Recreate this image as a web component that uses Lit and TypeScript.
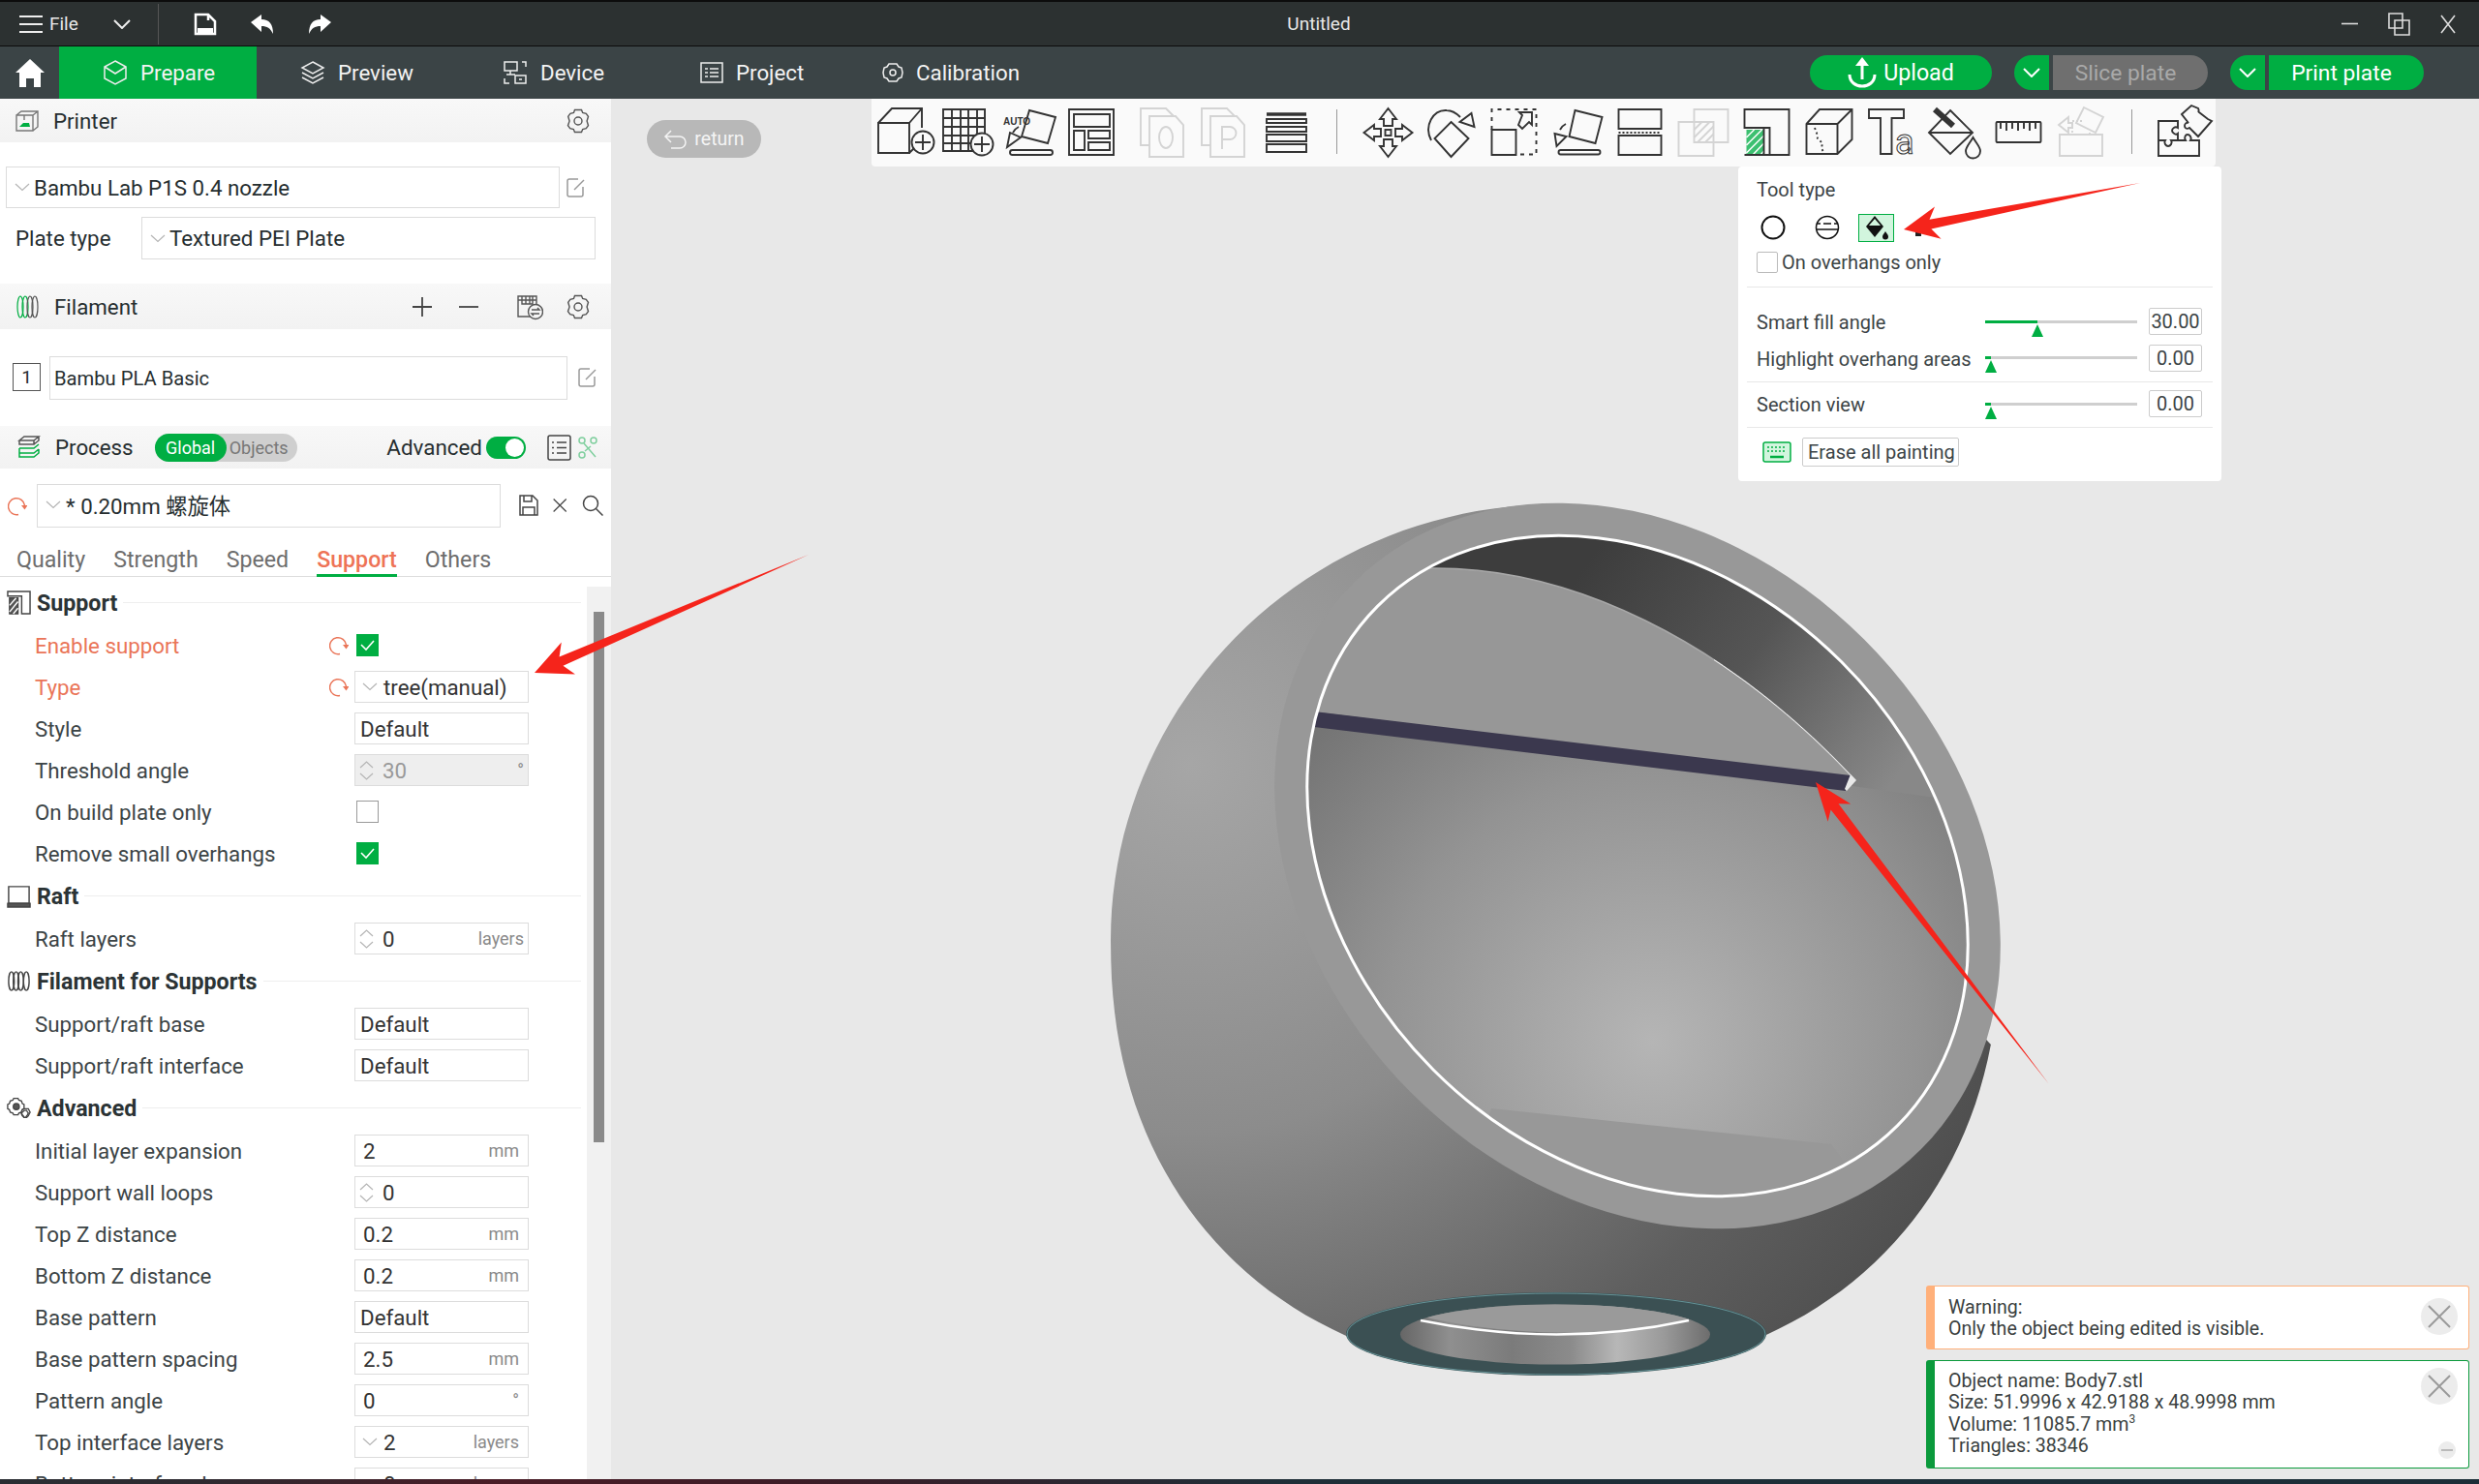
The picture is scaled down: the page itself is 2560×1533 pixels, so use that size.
import { LitElement, html, css, svg } from "lit";
import { customElement } from "lit/decorators.js";

const G = css`#00ae42`;

function bodyPath(): string {
  const cx = 1606, cy = 971, rx = 459, ry = 450;
  const seg: string[] = [];
  const steps = 180;
  for (let i = 0; i <= steps; i++) {
    const t = (i / steps) * Math.PI * 2;
    const c = Math.cos(t), s = Math.sin(t);
    // lower half (s > 0) is slightly squarer: the shape is cut flat by the hole
    const p = s > 0 ? 2.2 : 2;
    // the upper right part stays under the rim, which forms the outline there
    const k = c > 0 && s < 0.2 ? 0.95 : 1;
    const x = cx + k * rx * Math.sign(c) * Math.pow(Math.abs(c), 2 / p);
    const y = cy + k * ry * Math.sign(s) * Math.pow(Math.abs(s), 2 / p);
    seg.push(`${i === 0 ? "M" : "L"}${x.toFixed(1)},${y.toFixed(1)}`);
  }
  return seg.join("") + "Z";
}

function arrow(tx: number, ty: number, x: number, y: number, h: number, hw: number, nw: number): string {
  const L = Math.hypot(x - tx, y - ty);
  const u = [(x - tx) / L, (y - ty) / L];
  const v = [-u[1], u[0]];
  const pt = (back: number, side: number) =>
    `${(x - u[0] * back + v[0] * side).toFixed(1)},${(y - u[1] * back + v[1] * side).toFixed(1)}`;
  return `${tx},${ty} ${pt(h - 8, nw)} ${pt(h, hw)} ${x},${y} ${pt(h, -hw)} ${pt(h - 8, -nw)}`;
}

const spherePath = bodyPath();

const chev = html`<svg class="chev" viewBox="0 0 16 9"><path d="M1 1l7 6.5L15 1" /></svg>`;

const gear = html`<svg class="i24" viewBox="0 0 24 28"><path d="M8.5 2.5h7l1.2 3 3.6.8 2.2 3-1.4 4.7 1.4 4.7-2.2 3-3.6.8-1.2 3h-7l-1.2-3-3.6-.8-2.2-3L3.1 14 1.700 9.300l2.2-3 3.600-.8z" /><circle cx="12" cy="14" r="4" /></svg>`;

const editIc = html`<svg class="i20" viewBox="0 0 20 20"><path d="M17 9v8a2 2 0 0 1-2 2H3a2 2 0 0 1-2-2V3a2 2 0 0 1 2-2h9" /><path d="M8 12l10-10" /></svg>`;

const resetIc = html`<svg class="i20 orange" viewBox="0 0 20 20"><path d="M11 18.500A8.500 8.500 0 1 1 17.500 9" /><path class="fo" d="M14 9h6.500l-3 4.500z" /></svg>`;

type Row = { l: string; k: string; v?: string; u?: string; on?: boolean; mod?: boolean; dis?: boolean };

const secs: { h: string; ic: any; rows: Row[] }[] = [
  {
    h: "Support",
    ic: html`<svg class="sec-ic" viewBox="0 0 26 26"><path d="M1 1h24v24h-9V6H1z" /><path class="f" d="M3 8h9v17H3z" /><path class="wl" d="M3 16l7-8M3 23l9-11M7 25l5-6" /></svg>`,
    rows: [
      { l: "Enable support", k: "check", on: true, mod: true },
      { l: "Type", k: "combo", v: "tree(manual)", mod: true },
      { l: "Style", k: "text", v: "Default" },
      { l: "Threshold angle", k: "spin", v: "30", u: "°", dis: true },
      { l: "On build plate only", k: "check" },
      { l: "Remove small overhangs", k: "check", on: true },
    ],
  },
  {
    h: "Raft",
    ic: html`<svg class="sec-ic" viewBox="0 0 26 26"><path d="M2 3h22v18H2z" /><path class="f" d="M1 21h24v4H1z" /></svg>`,
    rows: [{ l: "Raft layers", k: "spin", v: "0", u: "layers" }],
  },
  {
    h: "Filament for Supports",
    ic: html`<svg class="sec-ic" viewBox="0 0 26 26"><ellipse cx="5" cy="13" rx="3" ry="10" /><ellipse cx="10" cy="13" rx="3" ry="10" /><ellipse cx="15" cy="13" rx="3" ry="10" /><ellipse cx="21" cy="13" rx="3" ry="10" /></svg>`,
    rows: [
      { l: "Support/raft base", k: "text", v: "Default" },
      { l: "Support/raft interface", k: "text", v: "Default" },
    ],
  },
  {
    h: "Advanced",
    ic: html`<svg class="sec-ic" viewBox="0 0 28 28"><path d="M8 3h5l1 2 3 1 1 3 2 1v5l-2 1-1 3-3 1-1 2H8l-1-2-3-1-1-3-2-1v-5l2-1 1-3 3-1z" /><circle class="f" cx="11" cy="12.500" r="3.500" /><path fill="#fff" d="M20 15h5l1 2 1 2-1 2-1 2-2 2h-3l-2-2-1-2v-3l1-2z" /><path d="M20 17h3l1 2 1 1-1 2-1 1-1 2h-2l-1-2-1-1-1-2 1-1z" /></svg>`,
    rows: [
      { l: "Initial layer expansion", k: "num", v: "2", u: "mm" },
      { l: "Support wall loops", k: "spin", v: "0" },
      { l: "Top Z distance", k: "num", v: "0.2", u: "mm" },
      { l: "Bottom Z distance", k: "num", v: "0.2", u: "mm" },
      { l: "Base pattern", k: "text", v: "Default" },
      { l: "Base pattern spacing", k: "num", v: "2.5", u: "mm" },
      { l: "Pattern angle", k: "num", v: "0", u: "°" },
      { l: "Top interface layers", k: "combo", v: "2", u: "layers" },
      { l: "Bottom interface layers", k: "combo", v: "0", u: "layers" },
    ],
  },
];

const tb1 = [
  svg`<path d="M4 25L18 10h31v20M4 25h32v31H4zM36 25l13-15M36 56l8-8" /><circle class="w" cx="50" cy="45" r="11.500" /><path d="M50 37v16M42 45h16" />`,
  svg`<path d="M7 11h43v43H7zM7 20h43M7 29h43M7 38h43M7 46h43M16 11v43M25 11v43M33 11v43M42 11v43" /><circle class="w" cx="47" cy="47" r="11.500" /><path d="M47 39v16M39 47h16" />`,
  svg`<path class="w" d="M32 12l27 7-8 27-27-7z" /><text class="auto" x="5" y="27">AUTO</text><path d="M15 35q2-4 6-6" /><path class="w" d="M9 50l3-15 11 5z" /><rect x="12" y="53" width="44" height="5" rx="2.500" />`,
  svg`<path d="M9 11h46v47H9zM14 16h37v13H14zM14 33h11v20H14zM29 33h22v8H29zM29 45h22v8H29z" />`,
];
const tb1g = [
  svg`<g class="gr"><path d="M10 10h26l8 8v30H10z" /><path class="w" d="M19 18h27l8 9v33H19z" /><ellipse cx="36" cy="40" rx="7" ry="11" /></g>`,
  svg`<g class="gr"><path d="M9 10h26l8 8v30H9z" /><path class="w" d="M18 18h27l8 9v33H18z" /><path d="M30 52V29h8a6 6 0 0 1 0 13h-8" /></g>`,
  svg`<path d="M12 16h41" class="thick" /><path d="M12 21h41v4H12zM12 29h41v5H12zM12 37h41v7H12zM12 47h41v8H12z" />`,
];
const tb2 = [
  svg`<path d="M32.500 10l8.500 11h-4v7h-9v-7h-4zM32.500 60L41 49h-4v-7h-9v7h-4zM7.500 35L18 27v4h7v8h-7v4zM57.500 35L47 27v4h-7v8h7v4z" /><rect x="29.500" y="32" width="6" height="6" />`,
  svg`<path d="M12 43C4 28 14 11 28 12c6 0 10 3 14 7" /><path d="M53.500 15l3 14-15-5z" /><path d="M32.500 24l18 17-18 19-17-19z" />`,
  svg`<path class="dash" d="M9.500 32V11h46v46.500H36" /><path d="M9.500 32h25v26h-25z" /><path d="M37 27l4 4 7-7 3 3V14H38l3 3z" />`,
  svg`<path d="M30.500 12l28 7-7 27-27-7z" /><path d="M15 32q2-4 6-6" /><path d="M9.500 36l12 3-10 10z" /><rect x="13.500" y="53" width="43" height="4.500" rx="2.200" />`,
  svg`<path d="M10.500 11h44v20h-44zM10.500 38h44v20h-44z" /><path class="dots" d="M10.500 35h44" />`,
  svg`<g class="gr"><path d="M23.500 11h35v34h-35zM7.500 24h36v35h-36z" /><path d="M23.500 32l8-8M23.500 40l16-16M27 45l16.500-16.500M35 45l8.500-8.500" /></g>`,
  svg`<path d="M10.500 11h46v47h-20V30h-26z" /><path fill="#3cc070" stroke="none" d="M12.500 32h18v26h-18z" /><path class="wl" d="M12.500 40l8-8M12.500 48l16-16M12.500 56l18-18M19 58l11.500-12M27 58l3.500-4" /><path d="M30.500 30v28h6M10.500 58h20" />`,
  svg`<path d="M9.500 26L23 11h33.500v31L41.500 57h-32zM9.500 26h32v31M41.500 26L56.500 11" /><path class="dots2" d="M18 30l2 5 1 6 5 5-1 5 3 6" />`,
  svg`<path d="M9 11h36v9H32.500v37H21V20H9z" /><text class="ta" x="36" y="57">a</text>`,
  svg`<path d="M28 12l23 23-23 22L6 35zM6 35h45" /><path class="thick2" d="M12 11l19 17" /><path class="w" d="M51.500 40c4 7 7.500 10 7.500 14a7.500 7.500 0 0 1-15 0c0-4 3.500-7 7.500-14z" />`,
  svg`<rect x="10.500" y="24" width="46" height="21" rx="1" /><path d="M15 24v7M21 24v9M27 24v7M33 24v9M39 24v7M45 24v9M51 24v7" />`,
  svg`<g class="gr"><path d="M11 37h44v22H11z" /><path d="M36 9l20 10-8 16-20-10z" /><path class="dots" d="M24 35V23h10M42 37v-4" /><path d="M10 27l10-8v6h4v5h-4v5z" /></g>`,
];
const puzzle = svg`<path d="M7 23h20v7c-3-2-6 1-6 3s4 5 6 3v7h-7c2 3-1 6-3 6s-5-3-3-6H7zM27 43h8c-2-3 0-6 2-6s5 3 3 6h9v16H7V43M7 43v16" /><path d="M36 14l10-9 7 3c2 4-1 2 1 4l9 7 4 2-14 16-9-9c-3 2-5 0-5-2s2-4 4-3z" transform="translate(-5 2)" />`;

@customElement("app-root")
export class AppRoot extends LitElement {
  static styles = css`
    :host { display: block; position: relative; width: 2560px; height: 1533px; overflow: hidden; font-family: Roboto, "Noto Sans CJK SC", sans-serif; color: #262e30; background: #e8e8e8; }
    .page { display: flex; flex-direction: column; height: 100%; }
    svg { display: block; flex: none; fill: none; }
    .titlebar { height: 48px; box-sizing: border-box; border-top: 2px solid #0c0c0c; border-bottom: 1px solid #0c0c0c; background: #2c3131; display: flex; align-items: center; color: #e8e8e8; font-size: 19px; flex: none; }
    .t-left { flex: 0 0 1322px; display: flex; align-items: center; padding-left: 20px; box-sizing: border-box; }
    .burger { width: 24px; height: 20px; stroke: #eee; stroke-width: 2; }
    .file { margin-left: 7px; width: 36px; }
    .t-chev { width: 18px; height: 10px; margin-left: 30px; stroke: #eee; stroke-width: 2; }
    .t-sep { width: 1px; height: 42px; background: #555; margin: 0 36px 0 28px; }
    .t-ic { width: 24px; height: 24px; margin-right: 35px; }
    .t-save { stroke: #fff; stroke-width: 2.500; }
    .title { width: 80px; text-align: center; }
    .win { margin-left: auto; display: flex; align-items: center; gap: 31px; padding-right: 24px; stroke: #ddd; stroke-width: 1.600; }
    .nav { height: 54px; flex: none; background: #3b4446; display: flex; align-items: stretch; color: #f3f3f3; font-size: 22.300px; }
    .home { width: 61px; display: flex; align-items: center; justify-content: center; }
    .tab { display: flex; align-items: center; gap: 13px; stroke: #eee; }
    .tab svg { width: 26px; height: 26px; stroke-width: 1.500; }
    .prep { background: ${G}; width: 204px; box-sizing: border-box; padding-left: 45px; }
    .prev { margin-left: 45px; width: 209px; }
    .dev { width: 203px; gap: 13px; }
    .proj { width: 187px; gap: 12px; }
    .calib { gap: 11px; }
    .nav-r { margin-left: auto; display: flex; align-items: center; padding-right: 57px; }
    .btn { height: 36px; background: ${G}; display: flex; align-items: center; justify-content: center; color: #fff; font-size: 22.800px; }
    .up { width: 188px; border-radius: 18px; gap: 7px; stroke: #fff; font-size: 23.200px; }
    .bl { width: 36px; border-radius: 18px 0 0 18px; margin-left: 23px; stroke: #fff; stroke-width: 2; }
    .bl svg { width: 18px; height: 10px; }
    .br { width: 160px; border-radius: 0 18px 18px 0; margin-left: 4px; box-sizing: border-box; padding-right: 10px; }
    .br.off { background: #6f6f6f; color: #a9a9a9; }
    .main { flex: 1; display: flex; min-height: 0; }
    .panel { width: 631px; background: #fff; display: flex; flex-direction: column; flex: none; stroke: #555; }
    .ph { background: linear-gradient(#f8f8f8, #f2f2f2); display: flex; align-items: center; font-size: 22.300px; flex: none; }
    .ph1 { height: 45px; padding-left: 16px; }
    .ph2 { height: 47px; padding-left: 17px; }
    .ph3 { height: 44px; padding-left: 18px; }
    .ph-t { margin-left: 15px; }
    .ph svg.g { stroke: #777; }
    .end { margin-left: auto; margin-right: 22px; }
    .i24 { width: 24px; height: 28px; stroke-width: 1.400; stroke: #555; }
    .i20 { width: 20px; height: 20px; stroke: #999; stroke-width: 1.500; }
    .orange { stroke: #ea7558; }
    .fo { fill: #ea7558; stroke: none; }
    .combo { border: 1px solid #dcdcdc; box-sizing: border-box; display: flex; align-items: center; font-size: 22.300px; background: #fff; }
    .chev { width: 16px; height: 9px; stroke: #b5b5b5; stroke-width: 1.200; }
    .pbody { height: 146px; flex: none; box-sizing: border-box; padding-top: 25px; }
    .prow { display: flex; align-items: center; padding-left: 6px; }
    .c1 { width: 572px; height: 43px; padding-left: 8px; gap: 4px; }
    .ed1 { margin-left: 7px; }
    .prow2 { display: flex; align-items: center; padding-left: 16px; margin-top: 9px; }
    .pl { width: 130px; font-size: 22.300px; }
    .c2 { width: 469px; height: 44px; padding-left: 8px; gap: 4px; }
    .filic { margin-left: 0; width: 24px; height: 26px; stroke: ${G}; stroke-width: 1.200; }
    .pm { stroke: #444; stroke-width: 1.800; width: 20px; height: 20px; }
    .mr { margin-left: auto; margin-right: 22px; display: flex; align-items: center; gap: 28px; }
    .ams { width: 28px; height: 28px; stroke: #555; stroke-width: 1.400; margin-left: 11px; margin-right: -4px; }
    .fbody { height: 100px; flex: none; box-sizing: border-box; padding: 28px 0 0 13px; display: flex; align-items: flex-start; align-self: stretch; }
    .num { width: 29px; height: 29px; margin-top: 7px; border: 1px solid #555; box-sizing: border-box; display: flex; align-items: center; justify-content: center; font-size: 19px; }
    .c3 { width: 535px; height: 45px; margin-left: 9px; padding-left: 4px; font-size: 20.200px; }
    .ed3 { margin: 12px 0 0 11px; }
    .pil { margin-left: 22px; width: 147px; height: 29px; border-radius: 15px; background: #cfcfcf; display: flex; font-size: 18px; color: #777; align-items: center; }
    .gl { width: 74px; height: 29px; border-radius: 15px; background: ${G}; color: #fff; display: flex; align-items: center; justify-content: center; margin-right: 3px; }
    .adv { margin-left: auto; font-size: 22.400px; }
    .tog { width: 41px; height: 23px; border-radius: 12px; background: ${G}; margin-left: 4px; display: flex; justify-content: flex-end; align-items: center; padding-right: 2px; box-sizing: border-box; }
    .knob { width: 19px; height: 19px; border-radius: 50%; background: #fff; }
    .lst { width: 25px; height: 27px; margin-left: 22px; stroke: #444; stroke-width: 1.500; }
    .sci { width: 22px; height: 24px; margin: 0 13px 0 6px; stroke: #7fcf9e; stroke-width: 1.500; }
    .preset { height: 61px; flex: none; display: flex; align-items: flex-start; padding: 16px 0 0 8px; box-sizing: border-box; }
    .rs { margin-top: 13px; }
    .c4 { width: 479px; height: 45px; margin-left: 10px; padding-left: 8px; gap: 5px; padding-bottom: 3px; }
    .ps { display: flex; align-items: center; margin: 11px 0 0 18px; gap: 13px; stroke: #444; stroke-width: 1.500; }
    .ps svg { width: 22px; height: 22px; }
    .ps .xs { width: 18px; }
    .tabs { height: 51px; flex: none; box-sizing: border-box; border-bottom: 1px solid #ddd; display: flex; gap: 29px; padding-left: 17px; font-size: 23.200px; color: #6e6e6e; }
    .t { height: 51px; box-sizing: border-box; padding-top: 19px; }
    .t.on { color: #ee7356; font-weight: 500; border-bottom: 3px solid ${G}; }
    .scroll { flex: 1; min-height: 0; display: flex; }
    .content { width: 606px; flex: none; overflow: hidden; padding-top: 4px; box-sizing: border-box; }
    .track { width: 25px; margin-top: 10px; background: #f1f1f1; display: flex; justify-content: center; padding-top: 26px; box-sizing: border-box; }
    .thumb { width: 11px; height: 548px; background: #8a8a8a; }
    .sec { height: 45px; display: flex; align-items: center; padding-left: 7px; font-size: 23.200px; font-weight: 700; color: #2b3335; }
    .sec-ic { width: 25px; height: 25px; stroke: #444; stroke-width: 1.500; margin-right: 6px; }
    .f { fill: #555; }
    .wl { stroke: #fff; stroke-width: 1.500; }
    .line { flex: 1; height: 1px; background: #eeeeee; margin: 0 6px 0 6px; }
    .row { height: 43px; display: flex; align-items: center; padding-left: 36px; font-size: 22.300px; color: #3c4446; flex: none; }
    .lab { width: 304px; flex: none; }
    .lab.mod { color: #ea7558; }
    .rst { width: 26px; flex: none; }
    .ctl { width: 180px; height: 33px; box-sizing: border-box; border: 1px solid #dcdcdc; display: flex; align-items: center; font-size: 22.300px; color: #333; position: relative; }
    .ctl.txt { padding-left: 5px; }
    .ctl.numc { padding-left: 8px; }
    .ctl.spn { padding-left: 28px; }
    .ctl.cmb { padding-left: 7px; gap: 6px; }
    .ctl.dis { background: #eeeeee; color: #999; }
    .unit { margin-left: auto; font-size: 18px; color: #8a8a8a; padding-right: 9px; }
    .spin .unit { padding-right: 4px; }
    .arrs { position: absolute; left: 4px; top: 5px; width: 15px; height: 22px; stroke: #b5b5b5; stroke-width: 1.200; }
    .cb { width: 23px; height: 23px; margin-left: 2px; box-sizing: border-box; border: 1px solid #9a9a9a; background: #fff; display: flex; align-items: center; justify-content: center; }
    .cb.on { background: ${G}; border-color: ${G}; }
    .cb svg { width: 15px; height: 12px; stroke: #fff; stroke-width: 1.600; }
    .vp { flex: 1; position: relative; min-width: 0; background: #e8e8e8; }
    .scene { position: absolute; inset: 0; width: 100%; height: 100%; }
    .ret { position: absolute; left: 37px; top: 22px; width: 118px; height: 39px; border-radius: 20px; background: #b8b8b8; color: #f4f4f4; font-size: 19.500px; display: flex; align-items: center; justify-content: center; gap: 6px; stroke: #f4f4f4; stroke-width: 1.500; }
    .ret svg { width: 26px; height: 22px; }
    .tb { position: absolute; left: 269px; top: 0; width: 1388px; height: 70px; background: #fafafa; display: flex; padding-left: 3px; box-sizing: border-box; align-items: flex-start; border-radius: 0 0 4px 4px; }
    .tb svg { stroke: #333; stroke-width: 1.900; height: 70px; }
    .tb .c64 { width: 64px; }
    .tb .c65 { width: 65px; }
    .tb .gap9 { margin-left: 9px; }
    .vs { width: 1px; height: 46px; background: #999; flex: none; margin: 11px 20px 0; }
    .w { fill: #fafafa; }
    .auto { font: 700 10px "Liberation Sans", Roboto, sans-serif; fill: #333; stroke: none; }
    .ta { font: 36px Roboto, sans-serif; fill: #fafafa; stroke: #333; stroke-width: 1; }
    .gr { stroke: #d4d4d4; }
    .thick { stroke-width: 3.500; }
    .thick2 { stroke-width: 6; }
    .dash { stroke-dasharray: 4 5; }
    .dots { stroke-dasharray: 2 2; }
    .dots2 { stroke-dasharray: 2 3; }
    .pop { position: absolute; left: 1164px; top: 70px; width: 499px; height: 325px; background: #fff; border-radius: 4px; box-sizing: border-box; padding: 0 19px; font-size: 20px; color: #3c4446; display: flex; flex-direction: column; }
    .pop-t { height: 48px; padding-top: 12px; box-sizing: border-box; }
    .tools { display: flex; align-items: center; height: 30px; stroke: #111; stroke-width: 2; flex: none; padding-left: 3px; }
    .tools svg { width: 28px; height: 28px; }
    .tools .s2 { margin-left: 28px; stroke-width: 1.500; }
    .tools .s3 { width: 12px; height: 18px; margin-left: 21px; stroke: none; }
    .bk { width: 37px; height: 29px; margin-left: 18px; background: #d2f5de; border: 1.500px solid ${G}; box-sizing: border-box; display: flex; align-items: center; justify-content: center; }
    .bk svg { width: 26px; height: 26px; }
    .ov { display: flex; align-items: center; gap: 4px; margin-top: 9px; height: 24px; flex: none; }
    .ov i { display: block; width: 22px; height: 22px; box-sizing: border-box; border: 1px solid #bbb; border-radius: 2px; }
    .hr { height: 1px; background: #e8e8e8; margin: 0 -10px; flex: none; }
    .hr1 { margin-top: 13px; }
    .sl { display: flex; align-items: center; height: 38px; flex: none; position: relative; }
    .sl1 { margin-top: 17px; }
    .sl-l { width: 236px; flex: none; white-space: nowrap; }
    .sl-t { width: 157px; height: 3px; background: #cfcfcf; position: relative; flex: none; margin-top: -2px; }
    .sl-f { height: 3px; background: ${G}; }
    .sl-k { position: absolute; top: 4px; width: 0; height: 0; border-left: 6px solid transparent; border-right: 6px solid transparent; border-bottom: 13px solid ${G}; }
    .sl-v { width: 55px; height: 28px; margin-left: 12px; box-sizing: border-box; border: 1px solid #ccc; border-radius: 2px; display: flex; align-items: center; justify-content: center; font-size: 20px; margin-top: -2px; }
    .sl2 { height: 37px; margin-bottom: 5px; }
    .sl3 { height: 46px; }
    .er { display: flex; align-items: center; margin-top: 10px; padding-left: 6px; flex: none; }
    .er svg { width: 30px; height: 24px; stroke: ${G}; stroke-width: 1.500; }
    .er-b { margin-left: 11px; width: 162px; height: 30px; border: 1px solid #ccc; border-radius: 2px; box-sizing: border-box; display: flex; align-items: center; padding-left: 5px; white-space: nowrap; }
    .nots { position: absolute; right: 10px; bottom: 11px; width: 561px; display: flex; flex-direction: column; gap: 11px; font-size: 19.600px; line-height: 22.300px; color: #3a3f40; }
    .no { background: #fff; box-sizing: border-box; border: 1px solid; border-left-width: 9px; border-radius: 3px; padding-left: 14px; position: relative; }
    .wn { height: 66px; border-color: #ffb07a; padding-top: 11px; }
    .inf { height: 112px; border-color: #0b9a3c; padding-top: 10px; }
    .x { position: absolute; right: 11px; top: 12px; width: 38px; height: 38px; border-radius: 50%; background: #ececec; stroke: #9a9a9a; stroke-width: 2; }
    .x.x2 { top: 7px; }
    .mn { position: absolute; right: 13px; bottom: 9px; width: 18px; height: 18px; border-radius: 50%; background: #ececec; stroke: #aaa; stroke-width: 1.500; }
    sup { font-size: 12px; line-height: 0; }
    .strip { height: 5px; flex: none; background: linear-gradient(90deg, #2a2e33, #2e2a30 8%, #4a1c26 20%, #3d1c26 32%, #1f2f38 52%, #1c2e38); }
    .over { position: absolute; inset: 0; width: 100%; height: 100%; pointer-events: none; }
  `;

  private control(r: Row) {
    if (r.k === "check")
      return html`<div class="cb ${r.on ? "on" : ""}">${r.on ? html`<svg viewBox="0 0 15 12"><path d="M1 5l5 5 8-9" /></svg>` : ""}</div>`;
    if (r.k === "text") return html`<div class="ctl txt">${r.v}</div>`;
    if (r.k === "num") return html`<div class="ctl numc">${r.v}<span class="unit">${r.u}</span></div>`;
    if (r.k === "combo") return html`<div class="ctl cmb">${chev}${r.v}${r.u ? html`<span class="unit">${r.u}</span>` : ""}</div>`;
    return html`<div class="ctl spn spin ${r.dis ? "dis" : ""}"><svg class="arrs" viewBox="0 0 15 22"><path d="M1 8l6.500-6L14 8M1 14l6.500 6 6.500-6" /></svg>${r.v}${r.u ? html`<span class="unit">${r.u}</span>` : ""}</div>`;
  }

  private slider(label: string, pct: number, v: string, cls: string) {
    return html`<div class="sl ${cls}"><span class="sl-l">${label}</span><div class="sl-t"><div class="sl-f" style="width:${pct}px"></div><div class="sl-k" style="left:${pct - 6}px"></div></div><div class="sl-v">${v}</div></div>`;
  }

  render() {
    return html`<div class="page">
      <div class="titlebar">
        <div class="t-left">
          <svg class="burger" viewBox="0 0 24 20"><path d="M0 2h24M0 10h24M0 18h24" /></svg>
          <span class="file">File</span>
          <svg class="t-chev" viewBox="0 0 18 10"><path d="M1 1l8 8 8-8" /></svg>
          <div class="t-sep"></div>
          <svg class="t-ic t-save" viewBox="0 0 24 24"><path d="M2 2h13l7 7v13H2zM15 2v6" /><path fill="#fff" stroke="none" d="M4 16h16v6H4z" /></svg>
          <svg class="t-ic" viewBox="0 0 24 24"><path fill="#fff" d="M11 2v5c8 0 12 5 12 15-3-6-6-8-12-8v6L0 10z" /></svg>
          <svg class="t-ic" viewBox="0 0 24 24"><path fill="#fff" d="M13 2v5C5 7 1 12 1 22c3-6 6-8 12-8v6l11-10z" /></svg>
        </div>
        <div class="title">Untitled</div>
        <div class="win">
          <svg width="17" height="3" viewBox="0 0 17 3"><path d="M0 1.500h17" /></svg>
          <svg width="23" height="24" viewBox="0 0 23 24"><path d="M1 1h14v15H1zM7 8h15v15H7z" /></svg>
          <svg width="16" height="20" viewBox="0 0 16 20"><path d="M1 1l14 18M15 1L1 19" /></svg>
        </div>
      </div>

      <div class="nav">
        <div class="home"><svg width="30" height="29" viewBox="0 0 30 29"><path fill="#fff" d="M15 0l15 14h-4v15h-7v-9h-8v9H4V14H0z" /></svg></div>
        <div class="tab prep"><svg viewBox="0 0 26 26"><path d="M13 1l11 6v12l-11 6-11-6V7zM2 7l11 7 11-7M13 14v0" /></svg>Prepare</div>
        <div class="tab prev"><svg viewBox="0 0 26 26"><path d="M13 2l11 6-11 6-11-6zM2 13l11 6 11-6M2 18l11 6 11-6" /></svg>Preview</div>
        <div class="tab dev"><svg viewBox="0 0 26 26"><path d="M2 2h13v9H2zM8 11v4M4 15h9M20 2h4v5M2 19v5h5M13 24v-8h11v8zM17 20h3" /></svg>Device</div>
        <div class="tab proj"><svg viewBox="0 0 26 26"><path d="M2 3h22v20H2zM6 9h3M11 9h9M6 13h3M11 13h9M6 17h3M11 17h9" /></svg>Project</div>
        <div class="tab calib"><svg viewBox="0 0 26 26"><path d="M9 4h8l2 3 3 1 1 5-1 5-3 1-2 3H9l-2-3-3-1-1-5 1-5 3-1z" /><circle cx="13" cy="13" r="3" /></svg>Calibration</div>
        <div class="nav-r">
          <div class="btn up"><svg width="30" height="32" viewBox="0 0 30 32" fill="none"><path stroke-width="3" d="M15 4v19M2 18c0 16 26 16 26 0" /><path fill="#fff" stroke="none" d="M15 0l7 9H8z" /></svg>Upload</div>
          <div class="btn bl"><svg viewBox="0 0 18 10"><path d="M1 1l8 8 8-8" /></svg></div>
          <div class="btn br off">Slice plate</div>
          <div class="btn bl"><svg viewBox="0 0 18 10"><path d="M1 1l8 8 8-8" /></svg></div>
          <div class="btn br">Print plate</div>
        </div>
      </div>

      <div class="main">
        <div class="panel">
          <div class="ph ph1">
            <svg class="g" width="24" height="22" viewBox="0 0 24 22" stroke-width="1.400"><path d="M1 5h17v16H1zM1 5l5-4h17v16l-5 4M18 5l5-4" /><path fill="#00ae42" stroke="none" d="M4 17l4-4h6l1 4z" /><path d="M9 5v5" /></svg>
            <span class="ph-t">Printer</span>
            <span class="end">${gear}</span>
          </div>
          <div class="pbody">
            <div class="prow"><div class="combo c1">${chev}Bambu Lab P1S 0.4 nozzle</div><span class="ed1">${editIc}</span></div>
            <div class="prow2"><span class="pl">Plate type</span><div class="combo c2">${chev}Textured PEI Plate</div></div>
          </div>
          <div class="ph ph2">
            <svg class="filic" viewBox="0 0 24 26"><ellipse cx="4" cy="13" rx="3" ry="11" /><ellipse cx="9" cy="13" rx="3" ry="11" /><ellipse cx="14" cy="13" rx="3" ry="11" stroke="#555" /><ellipse cx="19" cy="13" rx="3" ry="11" stroke="#555" /></svg>
            <span class="ph-t">Filament</span>
            <div class="mr">
              <svg class="pm" viewBox="0 0 20 20"><path d="M10 0v20M0 10h20" /></svg>
              <svg class="pm" viewBox="0 0 20 20"><path d="M0 10h20" /></svg>
              <svg class="ams" viewBox="0 0 28 28"><path d="M2 3h19v21H2zM2 7h19M6 3v8h11V3M10 3v8M14 3v8" /><circle cx="20" cy="19" r="7.500" fill="#f5f5f5" /><path d="M16 17h8l-2-2M24 21h-8l2 2" /></svg>
              ${gear}
            </div>
          </div>
          <div class="fbody">
            <div class="num">1</div>
            <div class="combo c3">Bambu PLA Basic</div>
            <span class="ed3">${editIc}</span>
          </div>
          <div class="ph ph3">
            <svg width="24" height="24" viewBox="0 0 24 24" stroke-width="1.500"><path stroke="#555" d="M2 5l5-4h15l-5 4zM2 5v4h15V5M22 1v4l-5 4" /><path stroke="#00ae42" d="M2 13l15 0 5-4M2 18h15l5-4M2 13v9h15l5-4v-4" /></svg>
            <span class="ph-t">Process</span>
            <div class="pil"><div class="gl">Global</div>Objects</div>
            <span class="adv">Advanced</span>
            <div class="tog"><div class="knob"></div></div>
            <svg class="lst" viewBox="0 0 25 27"><rect x="1" y="1" width="23" height="25" rx="2" /><path d="M5 8h2M10 8h10M5 13.500h2M10 13.500h10M5 19h2M10 19h10" /></svg>
            <svg class="sci" viewBox="0 0 22 24"><circle cx="5" cy="5" r="3" /><circle cx="17" cy="5" r="3" /><circle cx="5" cy="20" r="3" /><path d="M7 8l12 14M8 16l6-5" /></svg>
          </div>
          <div class="preset">
            <span class="rs">${resetIc}</span>
            <div class="combo c4">${chev}* 0.20mm 螺旋体</div>
            <div class="ps">
              <svg viewBox="0 0 22 22"><path d="M2 1h13l5 5v15H2zM6 1v6h8V1M5 21v-8h12v8" /></svg>
              <svg class="xs" viewBox="0 0 22 22"><path d="M2 3l16 16M18 3L2 19" /></svg>
              <svg viewBox="0 0 22 22"><circle cx="9" cy="9" r="7.500" /><path d="M14.500 14.500l7 7" /></svg>
            </div>
          </div>
          <div class="tabs">
            <div class="t">Quality</div><div class="t">Strength</div><div class="t">Speed</div><div class="t on">Support</div><div class="t">Others</div>
          </div>
          <div class="scroll">
            <div class="content">
              ${secs.map(
                (s) => html`<div class="sec">${s.ic}<span>${s.h}</span><div class="line"></div></div>
                  ${s.rows.map(
                    (r) => html`<div class="row"><span class="lab ${r.mod ? "mod" : ""}">${r.l}</span><span class="rst">${r.mod ? resetIc : ""}</span>${this.control(r)}</div>`,
                  )}`,
              )}
            </div>
            <div class="track"><div class="thumb"></div></div>
          </div>
        </div>

        <div class="vp">
          <svg class="scene" viewBox="631 102 1929 1426">
            <defs>
              <radialGradient id="sph" gradientUnits="userSpaceOnUse" cx="1230" cy="790" r="950">
                <stop offset="0" stop-color="#a6a6a6" /><stop offset=".4" stop-color="#8c8c8c" /><stop offset=".75" stop-color="#5e5e5e" /><stop offset="1" stop-color="#4a4a4a" />
              </radialGradient>
              <radialGradient id="cav" gradientUnits="userSpaceOnUse" cx="1706" cy="1076" r="560">
                <stop offset="0" stop-color="#b5b5b5" /><stop offset=".5" stop-color="#939393" /><stop offset="1" stop-color="#666" />
              </radialGradient>
              <linearGradient id="dk" gradientUnits="userSpaceOnUse" x1="1640" y1="580" x2="1960" y2="800">
                <stop offset="0" stop-color="#3d3d3d" /><stop offset=".5" stop-color="#555" /><stop offset=".85" stop-color="#7a7a7a" /><stop offset="1" stop-color="#888" />
              </linearGradient>
              <linearGradient id="hole" gradientUnits="userSpaceOnUse" x1="1446" y1="0" x2="1766" y2="0">
                <stop offset="0" stop-color="#666" /><stop offset=".16" stop-color="#8f8f8f" /><stop offset=".36" stop-color="#7b7b7b" /><stop offset=".55" stop-color="#8b8b8b" /><stop offset=".7" stop-color="#b7b7b7" /><stop offset=".85" stop-color="#9a9a9a" /><stop offset="1" stop-color="#6d6d6d" />
              </linearGradient>
              <clipPath id="in"><ellipse cx="1691" cy="894.500" rx="379.500" ry="298" transform="rotate(45 1691 894.500)" /></clipPath>
              <clipPath id="hc"><ellipse cx="1606" cy="1378.500" rx="160" ry="31" /></clipPath>
            </defs>
            <path d="${spherePath}" fill="url(#sph)" />
            <ellipse cx="1691" cy="894.500" rx="414" ry="331" transform="rotate(45 1691 894.500)" fill="#989898" />
            <g clip-path="url(#in)">
              <rect x="1300" y="500" width="800" height="800" fill="url(#cav)" />
              <path d="M1300 500H2100V838L1300 727z" fill="url(#dk)" />
              <path d="M1300 728V570L1476 587C1620 585 1780 660 1916 806z" fill="#979797" />
              <path d="M1476 587C1620 585 1780 660 1916 806" fill="none" stroke="#a8a8a8" stroke-width="1.500" />
              <path d="M1476 587C1620 585 1780 660 1916 806" fill="none" stroke="#f2f2f2" stroke-width="1" pathLength="100" stroke-dasharray="0 62 38" />
              <path d="M1340 733L1911 801 1906 817 1340 749z" fill="#3b384e" />
              <path d="M1911 800L1917 806 1907 817 1905 815z" fill="#e8e8e8" />
              <path d="M1540 1145L1891 1182 2000 1330H1480z" fill="#989898" />
            </g>
            <ellipse cx="1691" cy="894.500" rx="379.500" ry="298" transform="rotate(45 1691 894.500)" fill="none" stroke="#fff" stroke-width="3" />
            <ellipse cx="1607" cy="1378" rx="217" ry="43" fill="#3b5053" />
            <ellipse cx="1607" cy="1378" rx="216" ry="42" fill="none" stroke="#6fa3a8" stroke-width=".8" />
            <ellipse cx="1606" cy="1378.500" rx="160" ry="31" fill="url(#hole)" />
            <g clip-path="url(#hc)">
              <path d="M1440 1340H1770V1358Q1610 1395 1460 1358z" fill="#9a9a9a" />
            </g>
            <path d="M1467 1364Q1610 1393 1744 1364" fill="none" stroke="#fff" stroke-width="2.500" />
          </svg>

          <div class="ret"><svg viewBox="0 0 26 22"><path d="M8 2L2 8l6 6M2 8h15a6 6 0 0 1 0 12H8" /></svg>return</div>

          <div class="tb">
            ${tb1.map((p) => html`<svg class="c64" viewBox="0 0 64 70">${p}</svg>`)}
            ${tb1g.map((p, i) => html`<svg class="c64 ${i === 0 ? "gap9" : ""}" viewBox="0 0 64 70">${p}</svg>`)}
            <div class="vs"></div>
            ${tb2.map((p) => html`<svg class="c65" viewBox="0 0 65 70">${p}</svg>`)}
            <div class="vs"></div>
            <svg class="c64" viewBox="0 0 64 70">${puzzle}</svg>
          </div>

          <div class="pop">
            <div class="pop-t">Tool type</div>
            <div class="tools">
              <svg viewBox="0 0 28 28"><circle cx="14" cy="14" r="11.500" /></svg>
              <svg class="s2" viewBox="0 0 28 28"><circle cx="14" cy="14" r="11.500" /><path d="M3 10h4M10 10h8M21 10h4" /><path d="M3 16h22" /></svg>
              <div class="bk"><svg viewBox="0 0 26 26"><path fill="#111" stroke="none" d="M11 1l9 11-9 11-9-11z" /><path fill="#d2f5de" stroke="none" d="M5 11h12l-6-7z" /><path fill="#111" stroke="none" d="M22 17c2 3 3 4 3 5.500a3 3 0 0 1-6 0c0-1.500 1-2.500 3-5.500z" /></svg></div>
              <svg class="s3" viewBox="0 0 12 18"><path fill="#222" d="M5 0h2v5H5zM1 13h6v5H1z" /></svg>
            </div>
            <div class="ov"><i></i>On overhangs only</div>
            <div class="hr hr1"></div>
            ${this.slider("Smart fill angle", 54, "30.00", "sl1")}
            ${this.slider("Highlight overhang areas", 6, "0.00", "sl2")}
            <div class="hr"></div>
            ${this.slider("Section view", 6, "0.00", "sl3")}
            <div class="hr"></div>
            <div class="er">
              <svg viewBox="0 0 30 24"><rect x="1" y="2" width="28" height="20" rx="2" fill="#d2f5de" /><path d="M5 7h20M5 11h20" stroke-dasharray="2 2" /><path d="M8 17h14" stroke-width="2.500" /></svg>
              <div class="er-b">Erase all painting</div>
            </div>
          </div>

          <div class="nots">
            <div class="no wn">Warning:<br />Only the object being edited is visible.
              <svg class="x" viewBox="0 0 38 38"><path d="M8 8l22 22M30 8L8 30" /></svg>
            </div>
            <div class="no inf">Object name: Body7.stl<br />Size: 51.9996 x 42.9188 x 48.9998 mm<br />Volume: 11085.7 mm<sup>3</sup><br />Triangles: 38346
              <svg class="x x2" viewBox="0 0 38 38"><path d="M8 8l22 22M30 8L8 30" /></svg>
              <svg class="mn" viewBox="0 0 18 18"><path d="M3 9h12" /></svg>
            </div>
          </div>
        </div>
      </div>
      <div class="strip"></div>

      <svg class="over" viewBox="0 0 2560 1533">
        <polygon fill="#f5241b" points="${arrow(835, 573, 552, 695, 38, 18, 5)}" />
        <polygon fill="#f5241b" points="${arrow(2210, 189, 1966, 237, 36, 17, 5)}" />
        <polygon fill="#f5241b" points="${arrow(2116, 1120, 1875, 808, 40, 15, 5)}" />
      </svg>
    </div>`;
  }
}
